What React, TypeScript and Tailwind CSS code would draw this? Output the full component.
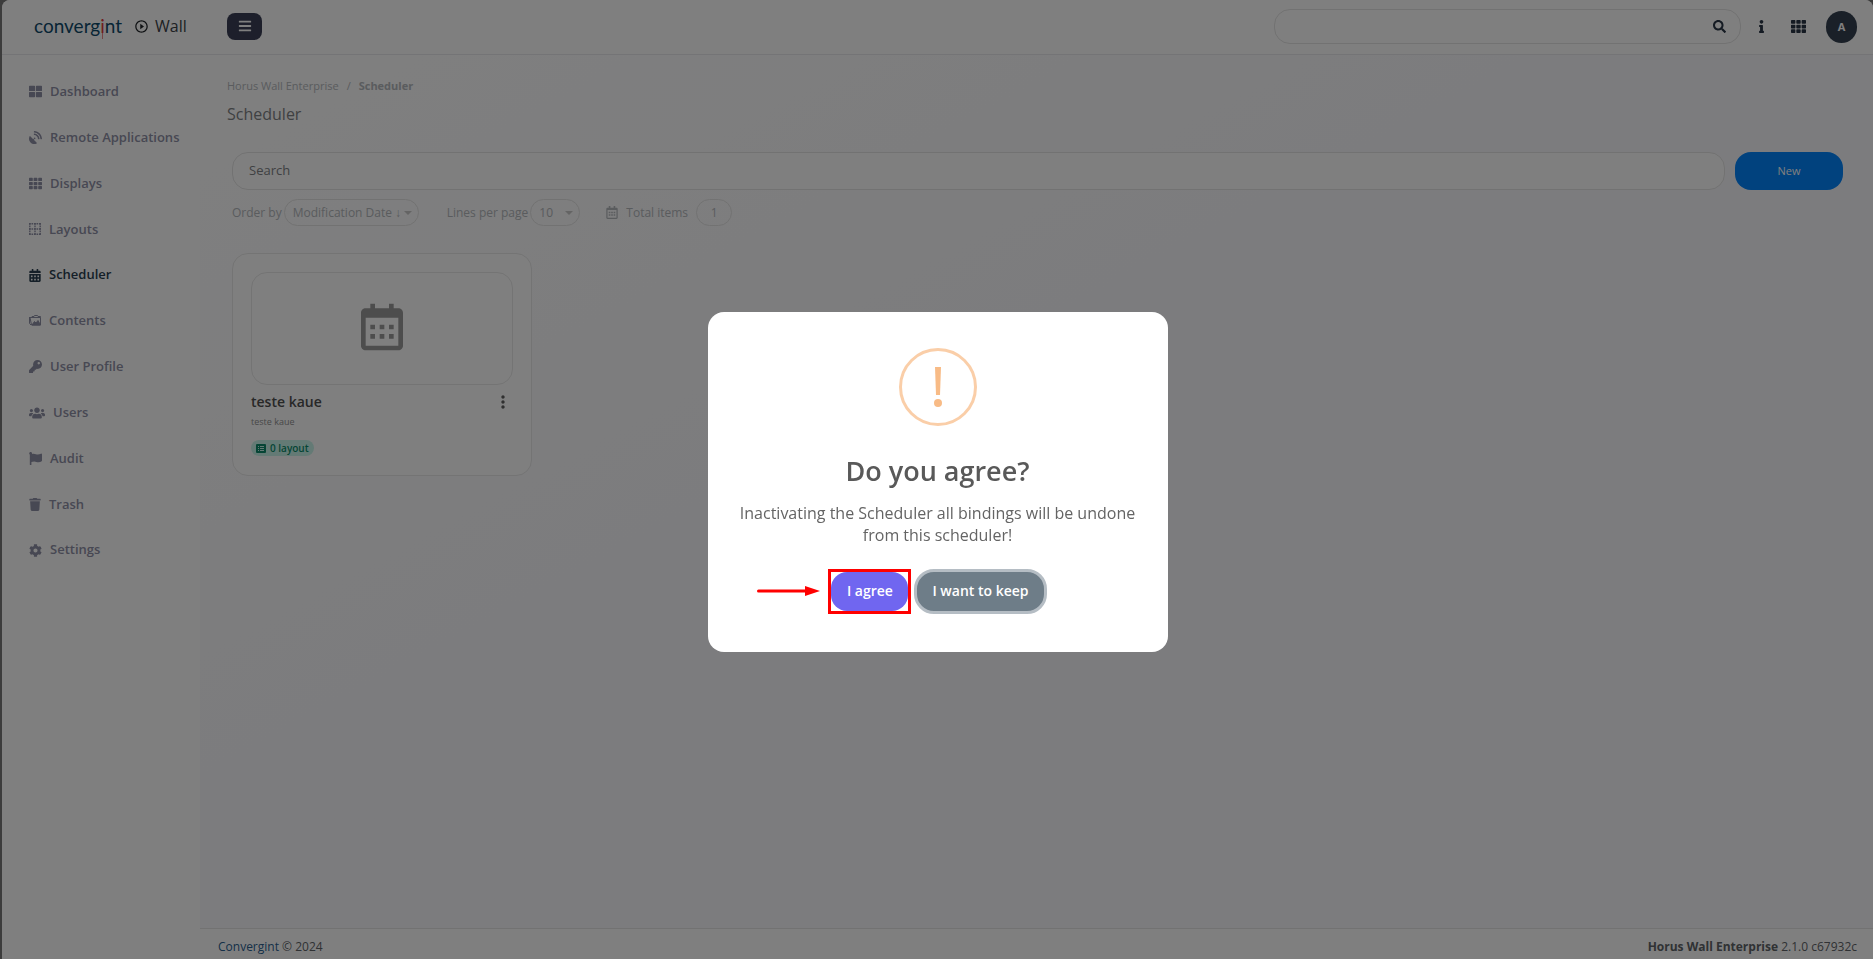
import type { ReactNode } from 'react';
import {
  FaBars,
  FaCalendarAlt,
  FaCog,
  FaFlag,
  FaInfo,
  FaKey,
  FaRegCalendarAlt,
  FaSatelliteDish,
  FaSearch,
  FaTh,
  FaThLarge,
  FaTrash,
  FaUsers,
} from 'react-icons/fa';
import { BiCalendar, BiDotsVerticalRounded } from 'react-icons/bi';
import { MdPlayCircleOutline } from 'react-icons/md';

function PhotosIcon() {
  return (
    <svg width="12" height="12" viewBox="0 0 12 12" fill="none" stroke="currentColor">
      <path d="M3 2.500V1.500h2l.5-1h3l.5 1h2.500v1" />
      <path d="M.5 2v6.500L2 10" />
      <path d="M1 2.500h10.500v7.500h-9z" />
      <path d="M3 10l2.500-3.500 1.500 1.500L9 5.500l2.500 4.500z" fill="currentColor" />
    </svg>
  );
}

function GridDotsIcon() {
  return (
    <svg width="12" height="12" viewBox="0 0 12 12" fill="none" stroke="currentColor" strokeWidth="1.4">
      <path d="M0 .8h12M0 6h12M0 11.200h12" strokeDasharray="1.700 .8" />
      <path d="M.8 0v12M6 0v12M11.200 0v12" strokeDasharray="1.700 .8" />
    </svg>
  );
}

function BadgeIcon() {
  return (
    <svg width="10" height="9" viewBox="0 0 10 9" fill="none">
      <rect width="10" height="9" rx="1" fill="currentColor" />
      <path d="M2 2.500h1M4 2.500h4M2 4.500h1M4 4.500h4M2 6.500h1M4 6.500h4" stroke="#c9f5ea" strokeWidth="1" />
    </svg>
  );
}

const menu: { label: string; icon: ReactNode; active?: boolean }[] = [
  { label: 'Dashboard', icon: <FaThLarge size={13} /> },
  { label: 'Remote Applications', icon: <FaSatelliteDish size={13} /> },
  { label: 'Displays', icon: <FaTh size={13} /> },
  { label: 'Layouts', icon: <GridDotsIcon /> },
  { label: 'Scheduler', icon: <FaCalendarAlt className="h-[13px] w-3" />, active: true },
  { label: 'Contents', icon: <PhotosIcon /> },
  { label: 'User Profile', icon: <FaKey size={13} /> },
  { label: 'Users', icon: <FaUsers size={16} /> },
  { label: 'Audit', icon: <FaFlag size={13} /> },
  { label: 'Trash', icon: <FaTrash className="h-[13px] w-3" /> },
  { label: 'Settings', icon: <FaCog size={13} /> },
];

function Header() {
  return (
    <header className="flex h-[55px] items-center border-b border-[#e8e8ec] bg-white pr-4 pb-0.5 pl-8">
      <a href="#" className="flex w-[193px] items-center">
        <span className="font-[Lato,sans-serif] text-[19px] leading-6 text-[#0f4a6b]">
          converg
          <span className="relative text-[#e0393e] after:absolute after:inset-x-[2px] after:top-3 after:-bottom-0.5 after:bg-[#e0393e]/60">i</span>
          nt
        </span>
        <MdPlayCircleOutline size={15} className="ml-3 text-[#212529]" />
        <span className="ml-1.5 text-base text-[#3c4248]">Wall</span>
      </a>
      <button aria-label="Toggle menu" className="flex h-[27px] w-[35px] items-center justify-center rounded-lg bg-[#3a3f56] text-white">
        <FaBars size={14} />
      </button>
      <div className="ml-auto flex h-[35px] w-[467px] items-center rounded-2xl border border-[#e4e4e4] pr-3.5 pl-4">
        <input aria-label="Search everything" className="min-w-0 flex-1 bg-transparent text-sm outline-none" />
        <button aria-label="Search">
          <FaSearch size={13} className="text-[#2a3747]" />
        </button>
      </div>
      <button aria-label="Information" className="ml-3 flex w-4 justify-center text-[#2a3747]">
        <FaInfo size={13} />
      </button>
      <button aria-label="Applications" className="ml-[22px] text-[#2a3747]">
        <FaTh size={15} />
      </button>
      <button className="mt-0.5 ml-5 flex h-8 w-[31px] items-center justify-center rounded-full bg-[#344150] text-[11px] font-bold text-white">
        A
      </button>
    </header>
  );
}

function Sidebar() {
  return (
    <aside className="w-[198px] shrink-0 bg-white pt-3.5">
      <nav className="grid h-[504px] auto-rows-fr">
        {menu.map(item => (
          <a
            key={item.label}
            href="#"
            className={`flex items-center gap-2 pl-[27px] text-[13px] font-semibold ${item.active ? 'text-[#2a3f50]' : 'text-[#8f90a6]'}`}
          >
            {item.icon}
            {item.label}
          </a>
        ))}
      </nav>
    </aside>
  );
}

function SelectArrow() {
  return <span className="pointer-events-none absolute right-[7px] border-x-4 border-t-4 border-x-transparent border-t-[#c8c8c8]" />;
}

function Toolbar() {
  return (
    <div className="mt-[9px] flex items-center text-xs text-[#b4b8bc]">
      <label htmlFor="order">Order by</label>
      <div className="relative ml-0.5 flex items-center">
        <select id="order" className="h-[27px] w-[135px] appearance-none rounded-full border border-[#e4e4e4] bg-transparent pl-2">
          <option>Modification Date ↓</option>
        </select>
        <SelectArrow />
      </div>
      <label htmlFor="lines" className="ml-7">Lines per page</label>
      <div className="relative ml-0.5 flex items-center">
        <select id="lines" className="h-[27px] w-[50px] appearance-none rounded-full border border-[#e4e4e4] bg-transparent pl-2">
          <option>10</option>
        </select>
        <SelectArrow />
      </div>
      <FaRegCalendarAlt className="ml-[26px] h-[13px] w-3" />
      <span className="ml-2">Total items</span>
      <span className="ml-2 flex h-[27px] w-9 items-center justify-center rounded-full border border-[#e4e4e4]">1</span>
    </div>
  );
}

function SchedulerCard() {
  return (
    <article className="mt-[27px] w-[300px] rounded-2xl border border-[#e8e8e8] bg-white px-[18px] pt-[18px] pb-4">
      <div className="flex h-[113px] items-center justify-center rounded-2xl border border-[#e8e8e8] pb-[3px] text-[#9a9a9a]">
        <BiCalendar size={56} />
      </div>
      <div className="mt-[5px] flex items-center justify-between">
        <h2 className="text-sm leading-6 font-semibold text-[#505050]">teste kaue</h2>
        <button aria-label="Options" className="text-[#606060]">
          <BiDotsVerticalRounded size={20} />
        </button>
      </div>
      <p className="text-[9px] leading-4 text-[#909090]">teste kaue</p>
      <span className="mt-2.5 inline-flex h-4 items-center gap-1 rounded-full bg-[#c9f5ea] px-[5px] text-[10px] font-semibold text-[#0c8b6b]">
        <BadgeIcon />
        0 layout
      </span>
    </article>
  );
}

function ConfirmDialog() {
  return (
    <div className="fixed inset-0 flex items-center justify-center bg-black/50 pt-1 pl-0.5">
      <div
        role="dialog"
        aria-modal="true"
        aria-labelledby="dialog-title"
        className="flex w-[460px] flex-col items-center rounded-2xl bg-white pt-9 pb-[38px] text-center"
      >
        <div className="flex size-[78px] items-center justify-center rounded-full border-3 border-[#facea8]">
          <svg width="8" height="40" viewBox="0 0 8 40" fill="#f8bb86">
            <path d="M1 0h6l-1 28H2z" />
            <circle cx="4" cy="36" r="4" />
          </svg>
        </div>
        <h2 id="dialog-title" className="mt-[25px] text-[27px] leading-10 font-semibold text-[#595959]">Do you agree?</h2>
        <p className="mt-[11px] px-6 text-base leading-[22px] text-[#646464]">
          Inactivating the Scheduler all bindings will be undone from this scheduler!
        </p>
        <div className="relative mt-[23px] flex items-center gap-[3px]">
          <svg width="63" height="10" viewBox="0 0 63 10" className="absolute right-full mr-2" fill="#f00">
            <path d="M1.500 5H50" stroke="#f00" strokeWidth="3" strokeLinecap="round" />
            <path d="M48 0l15 5-15 5z" />
          </svg>
          <div className="border-3 border-[#f00]">
            <button className="block h-[39px] w-[77px] rounded-2xl bg-[#7066f0] text-sm font-semibold text-white">I agree</button>
          </div>
          <button className="h-[45px] rounded-[20px] border-3 border-[#b5bdc4] bg-[#6e7d88] px-[15px] text-sm font-semibold text-white">
            I want to keep
          </button>
        </div>
      </div>
    </div>
  );
}

export default function App() {
  return (
    <div className="min-h-screen bg-[#787878] pl-0.5 font-['Open_Sans',sans-serif]">
      <div className="flex min-h-screen flex-col overflow-hidden rounded-t-lg bg-white">
        <Header />
        <div className="flex flex-1">
          <Sidebar />
          <div className="flex min-w-0 flex-1 flex-col bg-linear-to-br from-white via-[#f9f9fc] via-40% to-[#f9f9fc]">
            <main className="flex-1 pt-[22px] pr-[30px] pl-8">
              <nav aria-label="Breadcrumb" className="-ml-[5px] flex gap-2 text-[11px] leading-[18px] text-[#b4b8bc]">
                <a href="#">Horus Wall Enterprise</a>
                <span>/</span>
                <span className="font-bold">Scheduler</span>
              </nav>
              <h1 className="mt-2 -ml-[5px] text-base leading-[22px] text-[#808285]">Scheduler</h1>
              <div className="mt-[27px] flex gap-[10px]">
                <input
                  aria-label="Search"
                  placeholder="Search"
                  className="h-[38px] min-w-0 flex-1 rounded-2xl border border-[#e4e4e4] bg-white px-4 pb-0.5 text-[13px] placeholder:text-[#808285]"
                />
                <button className="w-[108px] rounded-2xl bg-[#0284fc] text-[11px] text-white">New</button>
              </div>
              <Toolbar />
              <SchedulerCard />
            </main>
            <footer className="flex h-[31px] items-center justify-between border-t border-[#e4e4e4] bg-white pt-1.5 pr-4 pl-[18px] text-xs text-[#606468]">
              <span><a href="#" className="text-[#2a6090]">Convergint</a> © 2024</span>
              <span><b>Horus Wall Enterprise</b> 2.1.0 c67932c</span>
            </footer>
          </div>
        </div>
      </div>
      <ConfirmDialog />
    </div>
  );
}
